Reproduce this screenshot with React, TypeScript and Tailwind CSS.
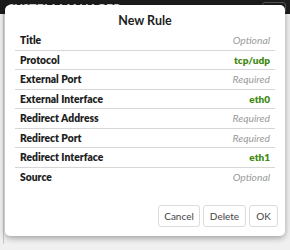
const rows: { label: string; value: string; kind: "hint" | "set" }[] = [
  { label: "Title", value: "Optional", kind: "hint" },
  { label: "Protocol", value: "tcp/udp", kind: "set" },
  { label: "External Port", value: "Required", kind: "hint" },
  { label: "External Interface", value: "eth0", kind: "set" },
  { label: "Redirect Address", value: "Required", kind: "hint" },
  { label: "Redirect Port", value: "Required", kind: "hint" },
  { label: "Redirect Interface", value: "eth1", kind: "set" },
  { label: "Source", value: "Optional", kind: "hint" },
];

const buttons = [
  { text: "Cancel", w: "w-[42px]" },
  { text: "Delete", w: "w-[43px]" },
  { text: "OK", w: "w-[29px]" },
];

export default function App() {
  return (
    <div className="relative h-[250px] w-[290px] overflow-hidden bg-[#f0f0f0] font-['Lato','Open_Sans',sans-serif]">
      {/* page behind the modal */}
      <div className="flex h-[14px] items-end justify-between bg-[#1c1c1c] pl-[8px] pr-[4px] text-[12px] font-bold leading-none tracking-wide text-[#d8d8d8]">
        <span>SYSTEM MANAGER</span>
        <span className="h-[12px] w-[24px] rounded-[3px] border border-[#555]" />
      </div>
      <div className="ml-[3px] h-[230px] w-px bg-[#c8c8c8]" />

      {/* modal */}
      <div className="absolute left-[5px] top-[5px] flex h-[231px] w-[280px] flex-col rounded-[5px] bg-white shadow-[0_2px_6px_rgba(0,0,0,0.35)]">
        <div className="pt-[8px] text-center text-[12.5px] font-bold leading-[16px] text-[#1e1e1e]">
          New Rule
        </div>
        <div className="mt-[2px] flex flex-col px-[10px]">
          {rows.map((r, i) => (
            <div
              key={r.label}
              className={`flex h-[19.5px] items-center justify-between px-[5px] leading-none ${
                i < rows.length - 1 ? "border-b border-[#d6d6d6]" : ""
              }`}
            >
              <span className="text-[10.3px] font-extrabold text-[#1e1e1e]">{r.label}</span>
              {r.kind === "hint" ? (
                <span className="text-[10.3px] italic text-[#9a9a9a]">{r.value}</span>
              ) : (
                <span className="text-[10px] font-extrabold text-[#3f8a12]">{r.value}</span>
              )}
            </div>
          ))}
        </div>
        <div className="mt-auto flex justify-end gap-[3px] pr-[7px] pb-[9px]">
          {buttons.map((b) => (
            <button
              key={b.text}
              className={`${b.w} h-[22px] rounded-[3px] border border-[#dcdcdc] bg-white text-[10px] text-[#444]`}
            >
              {b.text}
            </button>
          ))}
        </div>
      </div>
    </div>
  );
}
